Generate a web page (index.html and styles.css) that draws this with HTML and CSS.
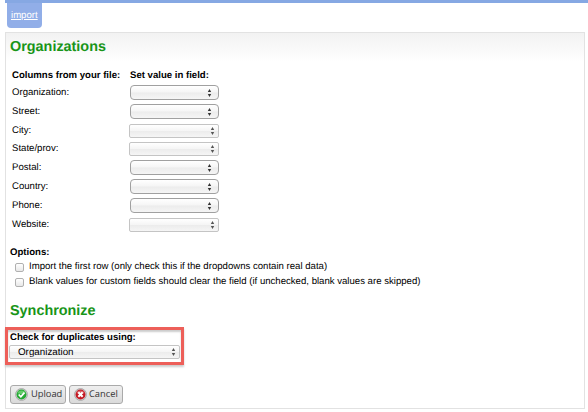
FILE: index.html
```html
<!DOCTYPE html>
<html lang="en">
<head>
<meta charset="utf-8">
<title>Import organizations</title>
<link rel="stylesheet" href="styles.css">
</head>
<body>
<svg class="defs" aria-hidden="true"><symbol id="arrows" viewBox="0 0 5 8"><path d="M2.5 0 4.2 3H.8ZM.8 5h3.4L2.5 8Z"/></symbol></svg>
<nav class="bar"><a class="tab" href="#"><span>import</span></a></nav>
<main class="panel">
<h2 class="title">Organizations</h2>
<div class="columns"><b class="c1">Columns from your file:</b><b class="c2">Set value in field:</b></div>
<div class="row"><span class="label">Organization:</span><button class="select dark"><svg><use href="#arrows"/></svg></button></div>
<div class="row"><span class="label">Street:</span><button class="select dark"><svg><use href="#arrows"/></svg></button></div>
<div class="row"><span class="label">City:</span><button class="select light"><svg><use href="#arrows"/></svg></button></div>
<div class="row short"><span class="label">State/prov:</span><button class="select light"><svg><use href="#arrows"/></svg></button></div>
<div class="row"><span class="label">Postal:</span><button class="select dark"><svg><use href="#arrows"/></svg></button></div>
<div class="row"><span class="label">Country:</span><button class="select dark"><svg><use href="#arrows"/></svg></button></div>
<div class="row"><span class="label">Phone:</span><button class="select dark"><svg><use href="#arrows"/></svg></button></div>
<div class="row"><span class="label">Website:</span><button class="select light"><svg><use href="#arrows"/></svg></button></div>
<div class="options"><b class="optitle">Options:</b></div>
<div class="option"><i class="box"></i><span class="note">Import the first row (only check this if the dropdowns contain real data)</span></div>
<div class="option"><i class="box"></i><span class="note">Blank values for custom fields should clear the field (if unchecked, blank values are skipped)</span></div>
<h2 class="title sync">Synchronize</h2>
<section class="highlight">
<b class="check">Check for duplicates using:</b>
<button class="select light wide"><span>Organization</span><svg><use href="#arrows"/></svg></button>
</section>
<div class="actions">
<button class="btn upload"><svg viewBox="0 0 12 12"><circle cx="6" cy="6" r="5.5" fill="#d5d5d5" stroke="#a5a5a5" stroke-width=".8"/><circle cx="6" cy="6" r="4.6" fill="#25a934"/><path d="M2 4.5a4.5 4 0 0 1 8 0Q6 6.5 2 4.5Z" fill="#62cc69"/><path d="m3.4 6 2 2.1L8.700 4.300" fill="none" stroke="#fff" stroke-width="1.600"/></svg><span>Upload</span></button>
<button class="btn cancel"><svg viewBox="0 0 12 12"><circle cx="6" cy="6" r="5.5" fill="#d5d5d5" stroke="#a5a5a5" stroke-width=".8"/><circle cx="6" cy="6" r="4.6" fill="#c41923"/><path d="M2 4.5a4.5 4 0 0 1 8 0Q6 6 2 4.500Z" fill="#d95b60"/><path d="m4 4 4 4m0-4L4 8" stroke="#fff" stroke-width="1.900"/></svg><span>Cancel</span></button>
</div>
</main>
</body>
</html>
```
FILE: styles.css
```css
* { box-sizing: border-box; }
body { margin: 0; background: #fff; color: #000; font: 9.6px/12px "Liberation Sans", Arial, sans-serif; overflow: hidden; text-rendering: geometricPrecision; }
.defs { display: none; }
.bar { height: 32px; margin-left: 5px; border-top: 3px solid #86a8e3; }
.tab { display: block; width: 35px; height: 25px; margin-left: 2px; padding: 7px 0 0 4px; background: #91aee8; border-radius: 0 0 4px 4px; color: #fff; white-space: nowrap; }
.panel { width: 580px; height: 377px; margin-left: 5px; border: 1px solid #e2e2e2; background: linear-gradient(#f2f2f2, #fff 29px); white-space: nowrap; }
.title { height: 16px; margin: 6px 0 0 4px; color: #189518; font-size: 14.4px; line-height: 16px; }
.columns { display: flex; height: 12px; margin: 15px 0 1px 6px; }
.c1 { width: 118px; }
.row { display: flex; align-items: center; height: 19px; padding-left: 6px; }
.row.short { height: 18px; }
.label { width: 118px; }
.select { display: flex; align-items: center; justify-content: flex-end; margin: 0; padding: 0; border: 1px solid #a0a0a0; border-radius: 4px; background: linear-gradient(#fff, #f5f5f5 48%, #ececec 52%, #f5f5f5); color: #000; font: inherit; text-rendering: inherit; }
.select svg { flex: none; width: 5px; height: 8px; fill: #333; }
.dark { width: 89px; height: 15px; padding-right: 6px; }
.light { width: 90px; height: 14px; margin-left: -1px; padding-right: 3px; border-color: #c4c4c4; border-radius: 2px; }
.light svg { fill: #555; }
.options { height: 12px; margin: 13px 0 1px 4px; }
.option { display: flex; align-items: center; height: 15px; padding-left: 9px; }
.box { width: 9px; height: 9px; margin-right: 5px; border: 1px solid #b0b0b0; border-radius: 2px; background: linear-gradient(#fff, #e8e8e8); }
.note { padding-bottom: 1px; }
.sync { margin-top: 13px; }
.highlight { width: 179px; height: 38px; margin: 8px 0 0 -1px; padding: 2px 0 0 1px; border: 3px solid #ed5f59; box-shadow: 0 2px 2px #ccc, inset 0 2px 2px #ccc; background: #fff; }
.check { display: block; height: 13px; padding-left: 1px; line-height: 12px; }
.wide { width: 171px; height: 14px; margin: 0; justify-content: space-between; padding-left: 8px; }
.wide span { padding-top: 1px; font-size: 9.8px; }
.actions { display: flex; gap: 3px; margin: 20px 0 0 4px; }
.btn { display: flex; align-items: center; gap: 3px; height: 19px; margin: 0; padding: 0 0 0 4px; border: 1px solid #aaa; border-radius: 3px; background: linear-gradient(#efefef, #dadada); color: #333; font: 500 9.3px/12px "Open Sans", Lato, sans-serif; text-rendering: inherit; }
.btn span { padding-bottom: 1px; }
.btn svg { flex: none; width: 13px; height: 13px; }
.upload { width: 56px; }
.cancel { width: 54px; }
.cancel { gap: 2px; }
```
